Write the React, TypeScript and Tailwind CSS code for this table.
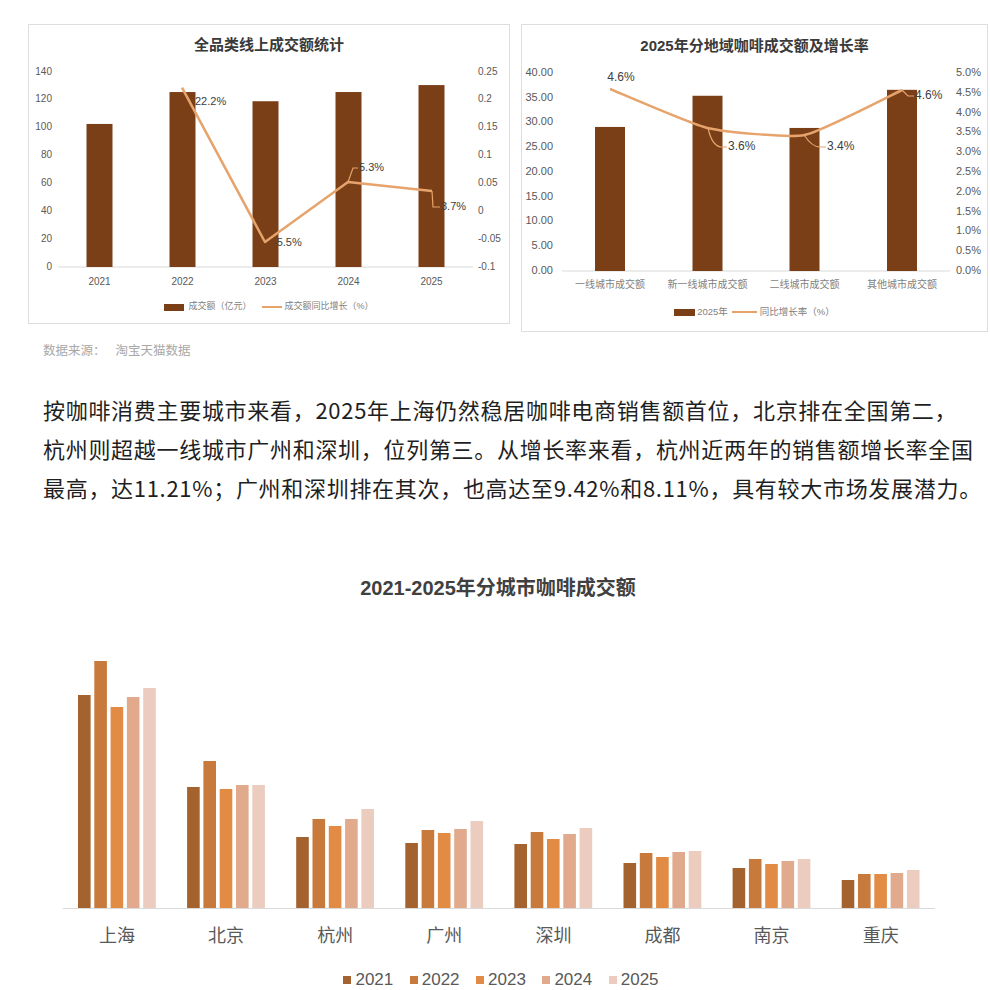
const BROWN = "#7b3f18";
const LINE = "#e6a46c";

const chart1 = [
  { year: "2021", value: 102.7 },
  { year: "2022", value: 125.6 },
  { year: "2023", value: 119 },
  { year: "2024", value: 125.6 },
  { year: "2025", value: 130.6 },
];

const chart2 = [
  { name: "一线城市成交额", value: 29.1 },
  { name: "新一线城市成交额", value: 35.4 },
  { name: "二线城市成交额", value: 28.9 },
  { name: "其他城市成交额", value: 36.6 },
];

const cities: [string, number[]][] = [
  ["上海", [213, 247, 201, 211, 220]],
  ["北京", [121, 147, 119, 123, 123]],
  ["杭州", [71, 89, 82, 89, 99]],
  ["广州", [65, 78, 75, 79, 87]],
  ["深圳", [64, 76, 69, 74, 80]],
  ["成都", [45, 55, 51, 56, 57]],
  ["南京", [40, 49, 44, 47, 49]],
  ["重庆", [28, 34, 34, 35, 38]],
];

const yearColors = ["#a4622f", "#c77a3b", "#e28b45", "#e2aa8c", "#ecccbe"];

// smooth line like excel's "smoothed line", low tension
function smooth(pts: [number, number][], k = 12) {
  let d = `M${pts[0][0]},${pts[0][1]}`;
  for (let i = 0; i < pts.length - 1; i++) {
    const p0 = pts[i - 1] || pts[i];
    const p1 = pts[i];
    const p2 = pts[i + 1];
    const p3 = pts[i + 2] || p2;
    const c1 = [p1[0] + (p2[0] - p0[0]) / k, p1[1] + (p2[1] - p0[1]) / k];
    const c2 = [p2[0] - (p3[0] - p1[0]) / k, p2[1] - (p3[1] - p1[1]) / k];
    d += ` C${c1[0]},${c1[1]} ${c2[0]},${c2[1]} ${p2[0]},${p2[1]}`;
  }
  return d;
}

function TotalChart() {
  const left = [140, 120, 100, 80, 60, 40, 20, 0];
  const right = ["0.25", "0.2", "0.15", "0.1", "0.05", "0", "-0.05", "-0.1"];
  const step = 195 / 7;
  return (
    <div className="w-[482px] h-[300px] shrink-0 border border-[#dedede] bg-white flex flex-col">
      <div className="pt-[11px] text-center text-[15px] leading-[18px] font-bold text-[#3a3a3a]">
        全品类线上成交额统计
      </div>
      <svg className="mt-[8px] block" width={480} height={230} viewBox="29 62 480 230">
        {left.map((v, i) => (
          <text key={v} x={52} y={72 + i * step} textAnchor="end" dominantBaseline="middle" fontSize={10} fill="#595959">
            {v}
          </text>
        ))}
        {right.map((v, i) => (
          <text key={v} x={478} y={72 + i * step} dominantBaseline="middle" fontSize={10} fill="#595959">
            {v}
          </text>
        ))}
        <line x1={58} y1={267} x2={473} y2={267} stroke="#d9d9d9" strokeWidth={1} />
        {chart1.map((d, i) => {
          const cx = 99.5 + i * 83;
          const h = d.value * 1.393;
          return (
            <g key={d.year}>
              <rect x={cx - 13} y={267 - h} width={26} height={h} fill={BROWN} />
              <text x={cx} y={282} textAnchor="middle" dominantBaseline="middle" fontSize={10} fill="#595959">
                {d.year}
              </text>
            </g>
          );
        })}
        <polyline points="182,87.6 265,242 348,182 432,191" fill="none" stroke={LINE} strokeWidth={2.5} strokeLinejoin="round" />
        <path d="M348,182 L353,168 L358,168" fill="none" stroke={LINE} strokeWidth={1.2} />
        <path d="M432,191 L433,207 L440,207" fill="none" stroke={LINE} strokeWidth={1.2} />
        <g fontSize={11} fill="#404040" dominantBaseline="middle">
          <text x={195} y={102}>22.2%</text>
          <text x={273} y={243}>-5.5%</text>
          <text x={359} y={168}>5.3%</text>
          <text x={441} y={207}>3.7%</text>
        </g>
      </svg>
      <div className="mt-[8px] h-[14px] flex items-center justify-center text-[9px] text-[#7f7f7f]">
        <span className="w-[20px] h-[7px] bg-[#7b3f18]" />
        <span className="ml-[4px]">成交额（亿元）</span>
        <span className="ml-[10px] w-[20px] h-[2.5px] bg-[#e6a46c]" />
        <span className="ml-[3px]">成交额同比增长（%）</span>
      </div>
    </div>
  );
}

function RegionChart() {
  const left = ["40.00", "35.00", "30.00", "25.00", "20.00", "15.00", "10.00", "5.00", "0.00"];
  const right = ["5.0%", "4.5%", "4.0%", "3.5%", "3.0%", "2.5%", "2.0%", "1.5%", "1.0%", "0.5%", "0.0%"];
  const centers = [610, 707.5, 804.5, 902];
  const pts: [number, number][] = [
    [610, 89],
    [707.5, 128],
    [804.5, 135],
    [902, 90],
  ];
  return (
    <div className="w-[467px] h-[308px] shrink-0 border border-[#dedede] bg-white flex flex-col">
      <div className="pt-[12px] text-center text-[15px] leading-[18px] font-bold text-[#3a3a3a]">
        2025年分地域咖啡成交额及增长率
      </div>
      <svg className="mt-[7px] block" width={465} height={234} viewBox="522 62 465 234">
        {left.map((v, i) => (
          <text key={v} x={553} y={73 + i * 24.75} textAnchor="end" dominantBaseline="middle" fontSize={11} fill="#595959">
            {v}
          </text>
        ))}
        {right.map((v, i) => (
          <text key={v} x={981} y={73 + i * 19.8} textAnchor="end" dominantBaseline="middle" fontSize={11} fill="#595959">
            {v}
          </text>
        ))}
        <line x1={562} y1={271} x2={950} y2={271} stroke="#d9d9d9" strokeWidth={1} />
        {chart2.map((d, i) => {
          const h = d.value * 4.95;
          return (
            <g key={d.name}>
              <rect x={centers[i] - 15} y={271 - h} width={30} height={h} fill={BROWN} />
              <text x={centers[i]} y={285} textAnchor="middle" dominantBaseline="middle" fontSize={10} fill="#7f7f7f">
                {d.name}
              </text>
            </g>
          );
        })}
        <path d={smooth(pts)} fill="none" stroke={LINE} strokeWidth={2.5} />
        <path d="M708,128 Q712,146 721,147 L727,147" fill="none" stroke={LINE} strokeWidth={1.2} />
        <path d="M804,135 Q812,147 820,147 L826,147" fill="none" stroke={LINE} strokeWidth={1.2} />
        <path d="M902,90 L908,96 L914,96" fill="none" stroke={LINE} strokeWidth={1.2} />
        <g fontSize={12} fill="#404040" dominantBaseline="middle">
          <text x={621} y={78} textAnchor="middle">4.6%</text>
          <text x={728} y={147}>3.6%</text>
          <text x={827} y={147}>3.4%</text>
          <text x={915} y={96}>4.6%</text>
        </g>
      </svg>
      <div className="mt-[9px] h-[14px] flex items-center justify-center text-[9.5px] text-[#7f7f7f]">
        <span className="w-[21px] h-[7px] bg-[#7b3f18]" />
        <span className="ml-[2px]">2025年</span>
        <span className="ml-[4px] w-[25px] h-[2.5px] bg-[#e6a46c]" />
        <span className="ml-[3px]">同比增长率（%）</span>
      </div>
    </div>
  );
}

function CityChart() {
  return (
    <div>
      <div className="mt-[68px] pl-[6px] text-center text-[20px] leading-[26px] font-bold text-[#404040]">
        2021-2025年分城市咖啡成交额
      </div>
      <svg className="block" width={990} height={350} viewBox="0 602 990 350">
        {cities.map(([name, vals], i) => {
          const cx = 117 + i * 109.1;
          return (
            <g key={name}>
              {vals.map((h, j) => (
                <rect key={j} x={cx - 39 + j * 16.3} y={909 - h} width={12.6} height={h} fill={yearColors[j]} />
              ))}
              <text x={cx} y={938} textAnchor="middle" dominantBaseline="middle" fontSize={18} fill="#595959">
                {name}
              </text>
            </g>
          );
        })}
        <line x1={63} y1={909.5} x2={935} y2={909.5} stroke="#d9d9d9" strokeWidth={1} />
      </svg>
      <div className="mt-[19px] pl-[12px] h-[20px] flex items-center justify-center gap-[16.5px] text-[17px] text-[#595959]">
        {["2021", "2022", "2023", "2024", "2025"].map((y, i) => (
          <div key={y} className="flex items-center gap-[4px]">
            <span className="w-[8px] h-[8px]" style={{ backgroundColor: yearColors[i] }} />
            <span>{y}</span>
          </div>
        ))}
      </div>
    </div>
  );
}

export default function App() {
  return (
    <div className="w-[990px] h-[990px] overflow-hidden bg-white font-['Liberation_Sans','Noto_Sans_CJK_SC',sans-serif]">
      <div className="flex items-start pl-[28px] pt-[24px] gap-[11px]">
        <TotalChart />
        <RegionChart />
      </div>
      <p className="mt-[11px] pl-[43px] text-[12.5px] leading-[16px] text-[#a8a8a8]">
        数据来源：<span className="ml-[10px]">淘宝天猫数据</span>
      </p>
      <div className="mt-[31px] pl-[43px] text-[22px] leading-[39px] tracking-[0.7px] text-[#1f1f1f] whitespace-nowrap font-['Noto_Sans_CJK_SC',sans-serif]">
        <div>按咖啡消费主要城市来看，2025年上海仍然稳居咖啡电商销售额首位，北京排在全国第二，</div>
        <div>杭州则超越一线城市广州和深圳，位列第三。从增长率来看，杭州近两年的销售额增长率全国</div>
        <div>最高，达11.21%；广州和深圳排在其次，也高达至9.42%和8.11%，具有较大市场发展潜力。</div>
      </div>
      <CityChart />
    </div>
  );
}
